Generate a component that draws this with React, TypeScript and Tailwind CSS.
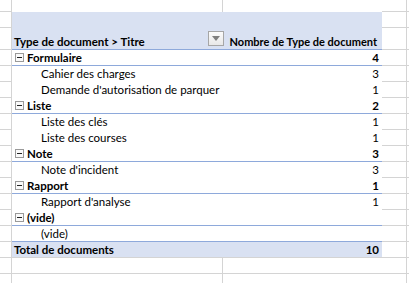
import React from 'react';

const FONT = { fontFamily: 'Lato, "Liberation Sans", sans-serif' };

type Item = [string, number | ''];
type Group = { cat: string; n: number | ''; items: Item[] };

const groups: Group[] = [
  { cat: 'Formulaire', n: 4, items: [['Cahier des charges', 3], ["Demande d'autorisation de parquer", 1]] },
  { cat: 'Liste', n: 2, items: [['Liste des clés', 1], ['Liste des courses', 1]] },
  { cat: 'Note', n: 3, items: [["Note d'incident", 3]] },
  { cat: 'Rapport', n: 1, items: [["Rapport d'analyse", 1]] },
  { cat: '(vide)', n: '', items: [['(vide)', '']] },
];

// one spreadsheet row: grey side cells, pivot area in the middle
const Row: React.FC<{ h: string; mid: React.ReactNode; midClass?: string; sideLine?: boolean }> = ({
  h,
  mid,
  midClass = '',
  sideLine = true,
}) => (
  <div className={`flex ${h}`}>
    <div className={`w-[12px] shrink-0 border-r border-[#d4d4d4] ${sideLine ? 'border-b' : ''}`} />
    <div className={`w-[370px] shrink-0 flex ${midClass}`}>{mid}</div>
    <div className={`w-[25px] shrink-0 border-r border-[#d4d4d4] ${sideLine ? 'border-b' : ''}`} />
    <div className={`flex-1 border-[#d4d4d4] ${sideLine ? 'border-b' : ''}`} />
  </div>
);

const MinusBox = () => (
  <svg width="9" height="9" viewBox="0 0 9 9" className="shrink-0">
    <rect x="0.5" y="0.5" width="8" height="8" fill="#fafafa" stroke="#9a9a9a" />
    <line x1="2" y1="4.5" x2="7" y2="4.5" stroke="#222" />
  </svg>
);

const EmptyCols = ({ bottom = true }: { bottom?: boolean }) => (
  <>
    <div className={`w-[211px] border-r border-[#d4d4d4] ${bottom ? 'border-b' : ''}`} />
    <div className={`flex-1 border-[#d4d4d4] ${bottom ? 'border-b' : ''}`} />
  </>
);

export default function App() {
  return (
    <div className="w-[409px] h-[283px] overflow-hidden bg-white text-black text-[11.5px]" style={FONT}>
      <Row h="h-[12px]" mid={<EmptyCols bottom={false} />} />

      {/* header block */}
      <Row h="h-[16px]" midClass="bg-[#d9e1f2]" mid={null} />
      <Row
        h="h-[22px]"
        midClass="bg-[#d9e1f2] border-b border-[#8ea9db] items-end justify-between pb-[2px]"
        mid={
          <>
            <span className="pl-[2px] font-bold leading-[11px]">Type de document &gt; Titre</span>
            <div className="flex items-end gap-[6px] pr-[5px]">
              <div className="w-[16px] h-[15px] mb-[1px] border border-[#a6a6a6] bg-gradient-to-b from-[#fbfbfb] to-[#e8e8e8] flex items-center justify-center">
                <svg width="8" height="5" viewBox="0 0 8 5">
                  <path d="M0 0H8L4 5Z" fill="#7f7f7f" />
                </svg>
              </div>
              <span className="font-bold leading-[11px] text-[11px]">Nombre de Type de document</span>
            </div>
          </>
        }
      />

      {groups.map((g, gi) => (
        <React.Fragment key={g.cat}>
          <Row
            h="h-[16px]"
            midClass="border-b border-[#8ea9db] items-center justify-between"
            mid={
              <>
                <div className="flex items-center gap-[3px] pl-[3px]">
                  <MinusBox />
                  <span className="font-bold leading-none">{g.cat}</span>
                </div>
                <span className="font-bold leading-none pr-[3px]">{g.n}</span>
              </>
            }
          />
          {g.items.map(([t, n], i) => {
            const lastOfAll = gi === groups.length - 1 && i === g.items.length - 1;
            return (
              <Row
                key={t + i}
                h="h-[16px]"
                midClass={`items-center justify-between ${lastOfAll ? 'border-b border-[#8ea9db]' : ''}`}
                mid={
                  <>
                    <span className="pl-[29px] leading-none">{t}</span>
                    <span className="leading-none pr-[3px]">{n}</span>
                  </>
                }
              />
            );
          })}
        </React.Fragment>
      ))}

      <Row
        h="h-[16px]"
        midClass="bg-[#d9e1f2] items-center justify-between border-b border-[#d4d4d4]"
        mid={
          <>
            <span className="pl-[2px] font-bold leading-none">Total de documents</span>
            <span className="pr-[3px] font-bold leading-none">10</span>
          </>
        }
      />
      <Row h="h-[16px]" mid={<EmptyCols />} />
      <Row h="h-[16px]" mid={<EmptyCols />} />
    </div>
  );
}
